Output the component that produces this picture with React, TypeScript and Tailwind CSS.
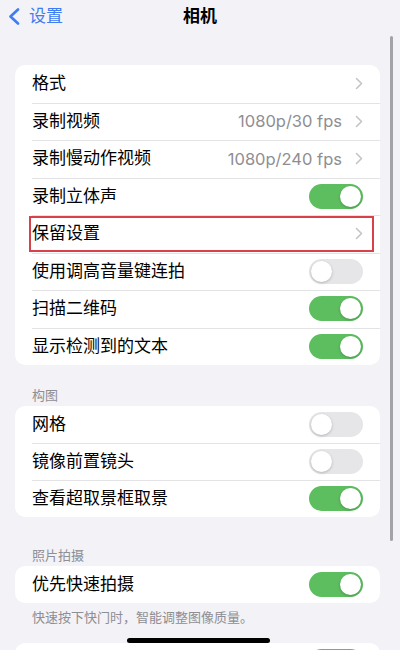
import type { ReactNode } from 'react';

const font = { fontFamily: '"Inter", "Noto Sans CJK SC", sans-serif' };

function Chevron() {
  return (
    <svg width="8" height="13" viewBox="0 0 8 13" fill="none" className="shrink-0">
      <path d="M1.5 1.5L6.5 6.5L1.5 11.5" stroke="#c4c4c7" strokeWidth="1.6" strokeLinecap="round" strokeLinejoin="round" />
    </svg>
  );
}

function Toggle({ on }: { on: boolean }) {
  return (
    <div
      className={
        'relative w-[54px] h-[25px] rounded-full shrink-0 ' +
        (on ? 'bg-[#5dbe5f]' : 'bg-[#e6e6e8]')
      }
    >
      <div
        className={
          'absolute top-[2px] w-[21px] h-[21px] rounded-full bg-white shadow-[0_1px_3px_rgba(0,0,0,0.22)] ' +
          (on ? 'right-[2px]' : 'left-[2px]')
        }
      />
    </div>
  );
}

type Row = { label: string; value?: string; toggle?: boolean; chevron?: boolean; boxed?: boolean };

function Card({ rows, h = 'h-[37.5px]' }: { rows: Row[]; h?: string }) {
  return (
    <div className="ml-[15px] mr-[20px] bg-white rounded-[10px] overflow-hidden">
      {rows.map((r, i) => (
        <div key={i} className={'relative flex items-center pl-[17px] ' + h}>
          {i > 0 && <div className="absolute top-0 left-[17px] right-0 h-px bg-[#e3e3e6]" />}
          <span className="flex-1 text-[17px] text-black leading-none">{r.label}</span>
          <div className="flex items-center pr-[17px]">
            {r.value && <span className="text-[16.5px] text-[#8e8e93] mr-[13px] leading-none">{r.value}</span>}
            {r.chevron && <Chevron />}
            {r.toggle !== undefined && <Toggle on={r.toggle} />}
          </div>
          {r.boxed && (
            <div className="absolute left-[14px] right-[6px] top-[1px] bottom-[1px] border-2 border-[#d8404a]" />
          )}
        </div>
      ))}
    </div>
  );
}

function Header({ children, pt }: { children: ReactNode; pt: string }) {
  return (
    <div className={'px-[32px] text-[13px] leading-[16px] text-[#8e8e93] pb-[3px] ' + pt}>{children}</div>
  );
}

export default function App() {
  return (
    <div className="relative w-[400px] h-[650px] overflow-hidden bg-[#f2f2f7]" style={font}>
      {/* nav bar */}
      <div className="relative h-[33px] flex items-center">
        <div className="flex items-center pl-[8px] gap-[9px] text-[#3f7cf0]">
          <svg width="12" height="17" viewBox="0 0 12 17" fill="none">
            <path d="M10 1.5L2.5 8.5L10 15.5" stroke="#3f7cf0" strokeWidth="2.6" strokeLinecap="round" strokeLinejoin="round" />
          </svg>
          <span className="text-[17px] leading-none">设置</span>
        </div>
        <div className="absolute inset-x-0 top-0 h-full flex items-center justify-center pointer-events-none">
          <span className="text-[17px] font-bold text-black leading-none">相机</span>
        </div>
      </div>

      <div className="pt-[32px]">
        <Card
          rows={[
            { label: '格式', chevron: true },
            { label: '录制视频', value: '1080p/30 fps', chevron: true },
            { label: '录制慢动作视频', value: '1080p/240 fps', chevron: true },
            { label: '录制立体声', toggle: true },
            { label: '保留设置', chevron: true, boxed: true },
            { label: '使用调高音量键连拍', toggle: false },
            { label: '扫描二维码', toggle: true },
            { label: '显示检测到的文本', toggle: true },
          ]}
        />

        <Header pt="pt-[22px]">构图</Header>
        <Card
          h="h-[37px]"
          rows={[
            { label: '网格', toggle: false },
            { label: '镜像前置镜头', toggle: false },
            { label: '查看超取景框取景', toggle: true },
          ]}
        />

        <Header pt="pt-[30px]">照片拍摄</Header>
        <Card h="h-[37px]" rows={[{ label: '优先快速拍摄', toggle: true }]} />
        <div className="px-[32px] pt-[6px] pb-[18px] text-[13px] leading-[16px] text-[#8e8e93]">
          快速按下快门时，智能调整图像质量。
        </div>
        <Card h="h-[37px]" rows={[{ label: '', toggle: true }]} />
      </div>

      {/* scroll indicator */}
      <div className="absolute right-[7px] top-[36px] w-[3px] h-[505px] rounded-full bg-[#a3a3a8]" />
      {/* home indicator */}
      <div className="absolute left-[127px] top-[638px] w-[143px] h-[5px] rounded-full bg-black" />
    </div>
  );
}
